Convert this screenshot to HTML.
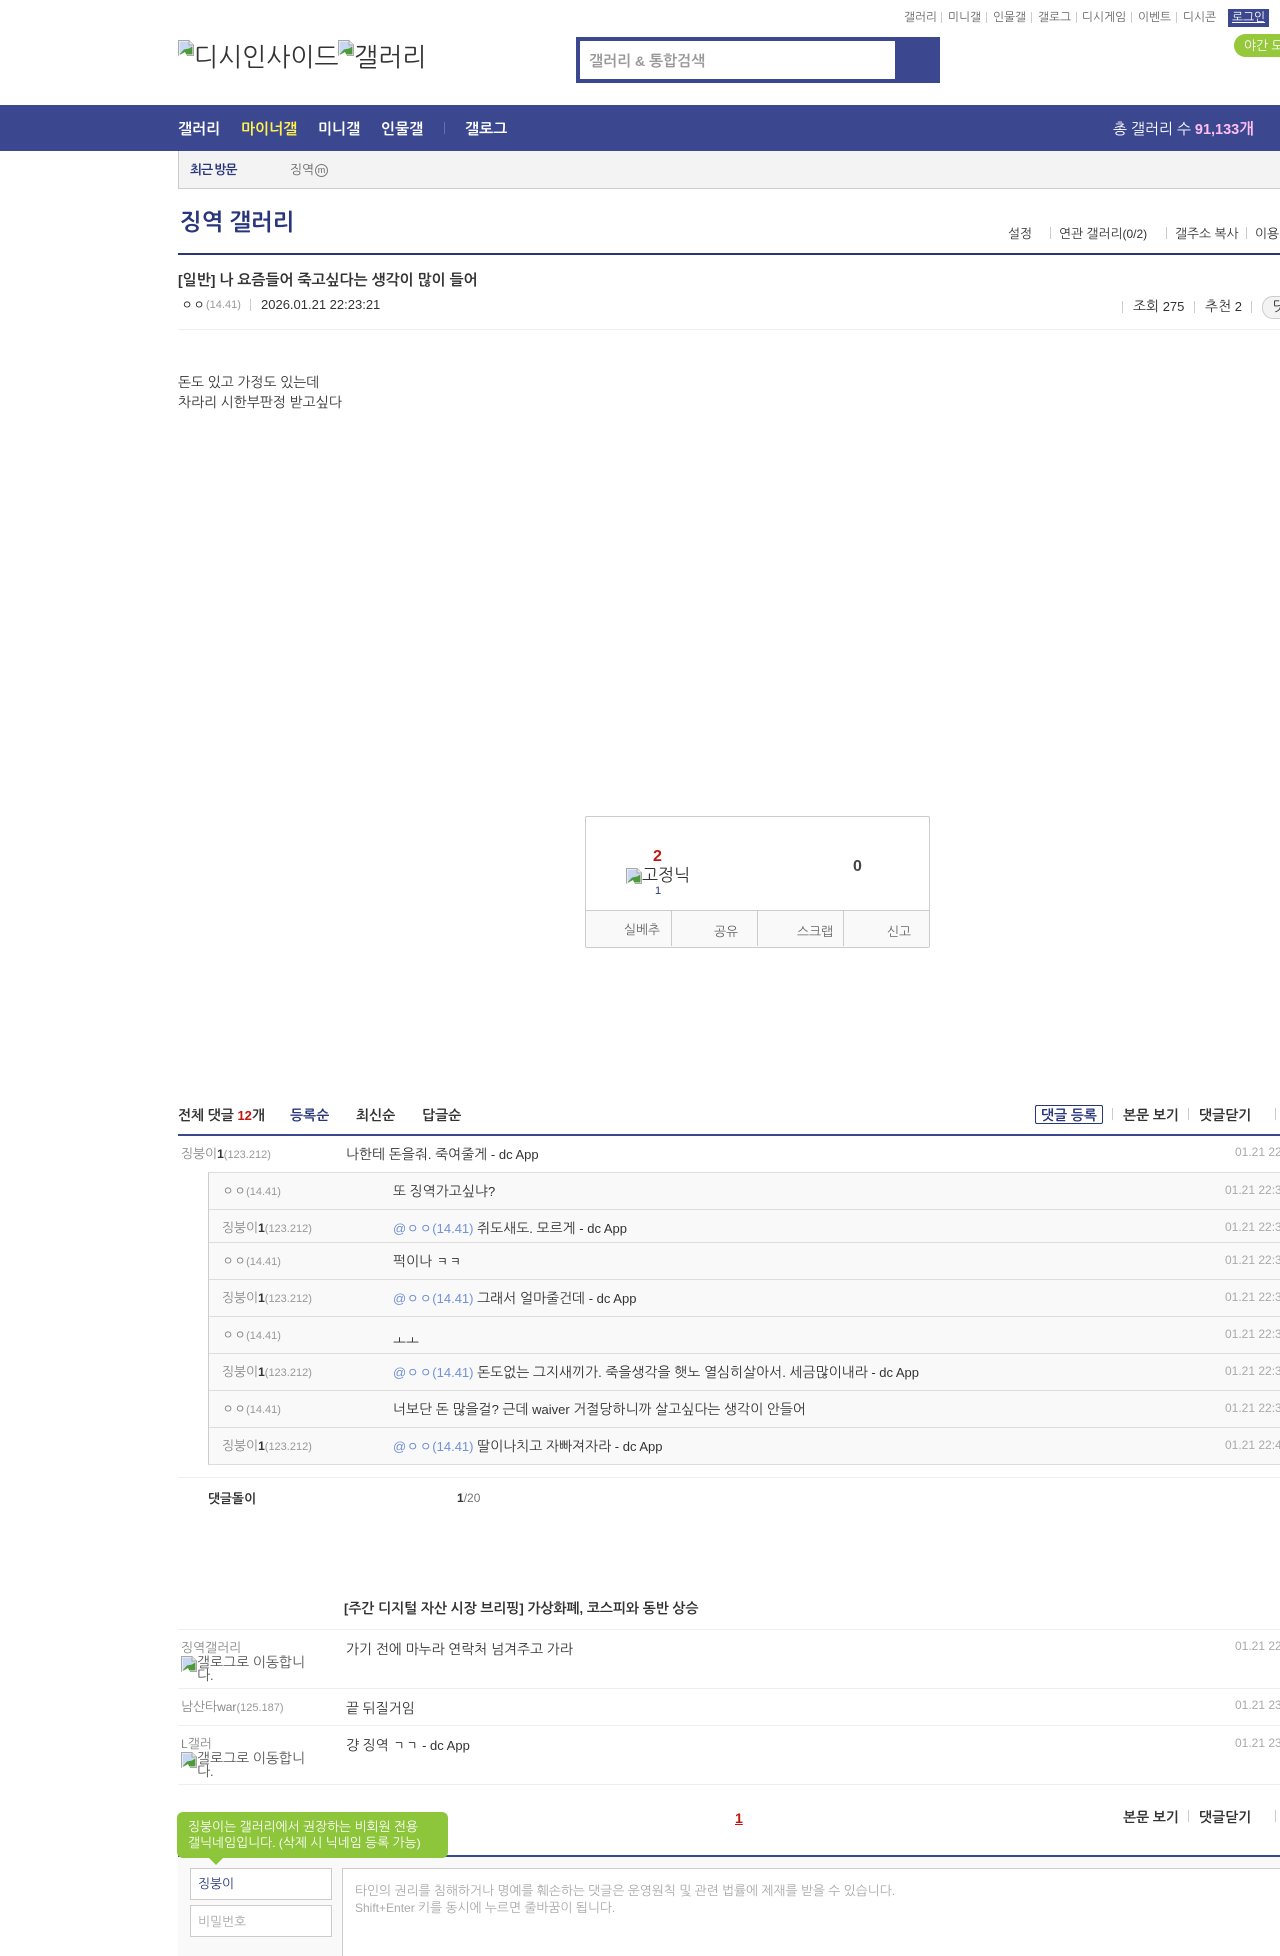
<!DOCTYPE html>
<html lang="ko">
<head>
<meta charset="utf-8">
<title>징역 갤러리</title>
<style>
html,body{margin:0;padding:0;width:1280px;height:1956px;overflow:hidden;background:#fff}
body{position:relative;font-family:"Liberation Sans","NanumGothic",sans-serif;font-size:13px;color:#333}
.t{position:absolute;white-space:nowrap;line-height:20px}
.b{position:absolute}
.s{position:absolute;width:1px;background:#ccc}
.n{font-size:12px;color:#888}
.n b{color:#333;font-weight:bold}
.n i{font-style:normal;font-size:11px;color:#999}
.d{font-size:12px;color:#aaa}
.m{color:#7192d6}
.h{font-weight:bold;color:#333}
.top{font-size:11px;color:#666}
.k{font-size:1.068em}
svg{position:absolute;display:block}
</style>
</head>
<body>
<svg width="0" height="0" style="position:absolute"><defs><symbol id="bk" viewBox="0 0 16 16"><path d="M.5.5H11L15.500 5V15.500H.5Z" fill="#fff" stroke="#a8a8a8"/><path d="M11 .5V5H15.500" fill="#e8e8e8" stroke="#a8a8a8"/><path d="M1.500 1.500H10.500V5.500H14.500V8L7 12 1.500 14.500Z" fill="#c7d6f2"/><path d="M1.500 14.500 6 9.500 11 8.500 14.500 6.500V14.500Z" fill="#4e9a3b"/><path d="M0 16 7 12 9 16Z" fill="#fff"/></symbol></defs></svg>

<!-- top links -->
<span class="t top" style="left:904px;top:8px">갤러리</span><i class="s" style="left:941px;top:12px;height:11px"></i>
<span class="t top" style="left:948px;top:8px">미니갤</span><i class="s" style="left:986px;top:12px;height:11px"></i>
<span class="t top" style="left:993px;top:8px">인물갤</span><i class="s" style="left:1031px;top:12px;height:11px"></i>
<span class="t top" style="left:1038px;top:8px">갤로그</span><i class="s" style="left:1076px;top:12px;height:11px"></i>
<span class="t top" style="left:1082px;top:8px">디시게임</span><i class="s" style="left:1131px;top:12px;height:11px"></i>
<span class="t top" style="left:1138px;top:8px">이벤트</span><i class="s" style="left:1176px;top:12px;height:11px"></i>
<span class="t top" style="left:1183px;top:8px">디시콘</span>
<div class="b" style="left:1228px;top:9px;width:41px;height:18px;background:#3b4890"></div>
<span class="t" style="left:1232px;top:8px;font-size:11px;color:#fff;text-decoration:underline">로그인</span>
<div class="b" style="left:1234px;top:34px;width:80px;height:23px;background:#95c83a;border-radius:12px"></div>
<span class="t" style="left:1244px;top:36px;font-size:12px;color:#fff">야간 모드</span>

<!-- logo -->
<svg style="left:178px;top:40px" width="16" height="16"><use href="#bk"/></svg>
<span class="t" style="left:194px;top:42px;font-size:24px;line-height:32px;color:#333">디시인사이드</span>
<svg style="left:338px;top:40px" width="16" height="16"><use href="#bk"/></svg>
<span class="t" style="left:354px;top:42px;font-size:24px;line-height:32px;color:#333">갤러리</span>

<!-- search -->
<div class="b" style="left:576px;top:37px;width:364px;height:46px;background:#3b4890"></div>
<div class="b" style="left:580px;top:41px;width:315px;height:38px;background:#fff"></div>
<span class="t" style="left:589px;top:51px;font-size:14px;font-weight:bold;color:#999">갤러리 &amp; 통합검색</span>

<!-- nav -->
<div class="b" style="left:0;top:105px;width:1280px;height:46px;background:#3b4890"></div>
<span class="t" style="left:178px;top:119px;font-size:14px;font-weight:bold;color:#fff">갤러리</span>
<span class="t" style="left:241px;top:119px;font-size:14px;font-weight:bold;color:#fff04f">마이너갤</span>
<span class="t" style="left:318px;top:119px;font-size:14px;font-weight:bold;color:#fff">미니갤</span>
<span class="t" style="left:381px;top:119px;font-size:14px;font-weight:bold;color:#fff">인물갤</span>
<i class="s" style="left:444px;top:122px;height:12px;background:#6670ab"></i>
<span class="t" style="left:465px;top:119px;font-size:14px;font-weight:bold;color:#fff">갤로그</span>
<span class="t" style="left:1113px;top:119px;font-size:14px;color:#fff">총 갤러리 수 <b style="color:#ffbdf0;font-size:14.5px">91,133개</b></span>

<!-- recent bar -->
<div class="b" style="left:178px;top:151px;width:1102px;height:37px;background:#f3f3f3;border-left:1px solid #ccc;border-bottom:1px solid #ccc"></div>
<span class="t" style="left:190px;top:160px;font-size:12px;font-weight:bold;color:#29367c;letter-spacing:-1px">최근 방문</span>
<span class="t" style="left:290px;top:160px;font-size:12px;color:#666">징역</span>
<div class="b" style="left:315px;top:164px;width:11px;height:11px;border:1px solid #777;border-radius:50%;font-size:9px;line-height:10px;text-align:center;color:#666">m</div>

<!-- title -->
<span class="t" style="left:180px;top:207px;font-size:21.6px;line-height:30px;font-weight:bold;color:#29367c">징역 갤러리</span>
<span class="t" style="left:1008px;top:224px;font-size:12px">설정</span><i class="s" style="left:1050px;top:227px;height:12px"></i>
<span class="t" style="left:1059px;top:224px;font-size:12px">연관 갤러리(0/2)</span><i class="s" style="left:1166px;top:227px;height:12px"></i>
<span class="t" style="left:1175px;top:224px;font-size:12px">갤주소 복사</span><i class="s" style="left:1246px;top:227px;height:12px"></i>
<span class="t" style="left:1255px;top:224px;font-size:12px">이용 안내</span>
<div class="b" style="left:178px;top:253px;width:1102px;height:2px;background:#29367c"></div>

<!-- post head -->
<span class="t" style="left:178px;top:270px;font-size:14px;font-weight:bold;color:#333">[일반] 나 요즘들어 죽고싶다는 생각이 많이 들어</span>
<span class="t" style="left:181px;top:295px;font-size:12px;color:#333">ㅇㅇ</span>
<span class="t" style="left:206px;top:295px;font-size:11px;color:#999">(14.41)</span>
<i class="s" style="left:250px;top:299px;height:12px"></i>
<span class="t" style="left:261px;top:295px;font-size:13px;color:#333">2026.01.21 22:23:21</span>
<i class="s" style="left:1122px;top:301px;height:12px"></i>
<span class="t" style="left:1133px;top:296px;font-size:13px">조회 275</span>
<i class="s" style="left:1194px;top:301px;height:12px"></i>
<span class="t" style="left:1205px;top:296px;font-size:13px">추천 2</span>
<i class="s" style="left:1251px;top:301px;height:12px"></i>
<div class="b" style="left:1262px;top:296px;width:70px;height:21px;background:#f3f3f3;border:1px solid #ccc;border-radius:11px"></div>
<span class="t" style="left:1273px;top:296px;font-size:13px">댓글 12</span>
<div class="b" style="left:178px;top:329px;width:1102px;height:1px;background:#eee"></div>

<!-- body -->
<span class="t" style="left:178px;top:372px;font-size:13px">돈도 있고 가정도 있는데</span>
<span class="t" style="left:178px;top:392px;font-size:13px">차라리 시한부판정 받고싶다</span>

<!-- recommend box -->
<div class="b" style="left:585px;top:816px;width:343px;height:130px;border:1px solid #ccc;border-radius:2px;background:#fff"></div>
<div class="b" style="left:586px;top:910px;width:343px;height:36px;background:#f9f9f9;border-top:1px solid #ccc"></div>
<i class="s" style="left:671px;top:910px;height:36px"></i>
<i class="s" style="left:757px;top:910px;height:36px"></i>
<i class="s" style="left:843px;top:910px;height:36px"></i>
<span class="t" style="left:653px;top:847px;font-size:16px;font-weight:bold;color:#c4160f">2</span>
<svg style="left:626px;top:868px" width="16" height="16"><use href="#bk"/></svg>
<span class="t" style="left:642px;top:866px;font-size:16px;color:#333">고정닉</span>
<span class="t" style="left:655px;top:881px;font-size:11px;color:#29367c">1</span>
<span class="t" style="left:853px;top:857px;font-size:16px;font-weight:bold;color:#444">0</span>
<span class="t" style="left:624px;top:920px;font-size:12px;color:#666">실베추</span>
<span class="t" style="left:714px;top:922px;font-size:12px;color:#666">공유</span>
<span class="t" style="left:797px;top:922px;font-size:12px;color:#666">스크랩</span>
<span class="t" style="left:887px;top:922px;font-size:12px;color:#666">신고</span>

<!-- comment header -->
<span class="t h" style="left:178px;top:1105px">전체 댓글 <span style="color:#c4160f">12</span>개</span>
<span class="t" style="left:290px;top:1105px;font-weight:bold;color:#29367c">등록순</span>
<span class="t h" style="left:356px;top:1105px">최신순</span>
<span class="t h" style="left:422px;top:1105px">답글순</span>
<div class="b" style="left:1035px;top:1105px;width:66px;height:17px;border:1px solid #29367c;border-radius:2px"></div>
<span class="t" style="left:1041px;top:1105px;font-weight:bold;color:#29367c">댓글 등록</span>
<i class="s" style="left:1112px;top:1108px;height:12px"></i>
<span class="t h" style="left:1123px;top:1105px">본문 보기</span>
<i class="s" style="left:1188px;top:1108px;height:12px"></i>
<span class="t h" style="left:1199px;top:1105px">댓글닫기</span>
<i class="s" style="left:1275px;top:1108px;height:12px"></i>
<div class="b" style="left:178px;top:1134px;width:1102px;height:2px;background:#3b4890"></div>

<!-- comment 1 -->
<span class="t n" style="left:181px;top:1144px">징붕이<b>1</b><i>(123.212)</i></span>
<span class="t" style="left:346px;top:1144px">나한테 돈을줘. 죽여줄게 - dc App</span>
<span class="t d" style="left:1235px;top:1142px">01.21 22:27:30</span>

<!-- replies -->
<div class="b" style="left:208px;top:1172px;width:1072px;height:291px;background:#f9f9f9;border-left:1px solid #ccc;border-top:1px solid #ddd;border-bottom:1px solid #ddd"></div>
<div class="b" style="left:209px;top:1209px;width:1071px;height:1px;background:#ddd"></div>
<div class="b" style="left:209px;top:1242px;width:1071px;height:1px;background:#ddd"></div>
<div class="b" style="left:209px;top:1279px;width:1071px;height:1px;background:#ddd"></div>
<div class="b" style="left:209px;top:1316px;width:1071px;height:1px;background:#ddd"></div>
<div class="b" style="left:209px;top:1353px;width:1071px;height:1px;background:#ddd"></div>
<div class="b" style="left:209px;top:1390px;width:1071px;height:1px;background:#ddd"></div>
<div class="b" style="left:209px;top:1427px;width:1071px;height:1px;background:#ddd"></div>

<span class="t n" style="left:222px;top:1181px">ㅇㅇ<i>(14.41)</i></span>
<span class="t" style="left:393px;top:1181px">또 징역가고싶냐?</span>
<span class="t d" style="left:1225px;top:1180px">01.21 22:30:12</span>

<span class="t n" style="left:222px;top:1218px">징붕이<b>1</b><i>(123.212)</i></span>
<span class="t" style="left:393px;top:1218px"><span class="m">@ㅇㅇ(14.41)</span> 쥐도새도. 모르게 - dc App</span>
<span class="t d" style="left:1225px;top:1217px">01.21 22:31:05</span>

<span class="t n" style="left:222px;top:1251px">ㅇㅇ<i>(14.41)</i></span>
<span class="t" style="left:393px;top:1251px">퍽이나 ㅋㅋ</span>
<span class="t d" style="left:1225px;top:1250px">01.21 22:31:40</span>

<span class="t n" style="left:222px;top:1288px">징붕이<b>1</b><i>(123.212)</i></span>
<span class="t" style="left:393px;top:1288px"><span class="m">@ㅇㅇ(14.41)</span> 그래서 얼마줄건데 - dc App</span>
<span class="t d" style="left:1225px;top:1287px">01.21 22:32:18</span>

<span class="t n" style="left:222px;top:1325px">ㅇㅇ<i>(14.41)</i></span>
<span class="t" style="left:393px;top:1329px">ㅗㅗ</span>
<span class="t d" style="left:1225px;top:1324px">01.21 22:33:02</span>

<span class="t n" style="left:222px;top:1362px">징붕이<b>1</b><i>(123.212)</i></span>
<span class="t" style="left:393px;top:1362px"><span class="m">@ㅇㅇ(14.41)</span> 돈도없는 그지새끼가. 죽을생각을 햇노 열심히살아서. 세금많이내라 - dc App</span>
<span class="t d" style="left:1225px;top:1361px">01.21 22:35:44</span>

<span class="t n" style="left:222px;top:1399px">ㅇㅇ<i>(14.41)</i></span>
<span class="t" style="left:393px;top:1399px">너보단 돈 많을걸? 근데 waiver 거절당하니까 살고싶다는 생각이 안들어</span>
<span class="t d" style="left:1225px;top:1398px">01.21 22:38:21</span>

<span class="t n" style="left:222px;top:1436px">징붕이<b>1</b><i>(123.212)</i></span>
<span class="t" style="left:393px;top:1436px"><span class="m">@ㅇㅇ(14.41)</span> 딸이나치고 자빠져자라 - dc App</span>
<span class="t d" style="left:1225px;top:1435px">01.21 22:40:09</span>

<!-- dolgi -->
<div class="b" style="left:178px;top:1477px;width:1102px;height:1px;background:#eee"></div>
<span class="t" style="left:208px;top:1489px;font-size:12px;font-weight:bold;color:#333">댓글돌이</span>
<span class="t" style="left:457px;top:1488px;font-size:12px;color:#777"><b style="color:#333">1</b>/20</span>
<span class="t h" style="left:344px;top:1598px">[주간 디지털 자산 시장 브리핑] 가상화폐, 코스피와 동반 상승</span>
<div class="b" style="left:178px;top:1629px;width:1102px;height:1px;background:#eee"></div>

<span class="t n" style="left:181px;top:1638px">징역갤러리</span>
<svg style="left:181px;top:1656px" width="16" height="16"><use href="#bk"/></svg>
<span class="t" style="left:197px;top:1652px;font-size:13px;color:#555">갤로그로 이동합니</span>
<span class="t" style="left:197px;top:1665px;font-size:13px;color:#555">다.</span>
<span class="t" style="left:346px;top:1639px">가기 전에 마누라 연락처 넘겨주고 가라</span>
<span class="t d" style="left:1235px;top:1636px">01.21 22:50:14</span>
<div class="b" style="left:178px;top:1688px;width:1102px;height:1px;background:#eee"></div>

<span class="t n" style="left:181px;top:1697px">남산타war<i>(125.187)</i></span>
<span class="t" style="left:346px;top:1698px">끝 뒤질거임</span>
<span class="t d" style="left:1235px;top:1695px">01.21 23:02:47</span>
<div class="b" style="left:178px;top:1725px;width:1102px;height:1px;background:#eee"></div>

<span class="t n" style="left:181px;top:1734px">L갤러</span>
<svg style="left:181px;top:1752px" width="16" height="16"><use href="#bk"/></svg>
<span class="t" style="left:197px;top:1748px;font-size:13px;color:#555">갤로그로 이동합니</span>
<span class="t" style="left:197px;top:1761px;font-size:13px;color:#555">다.</span>
<span class="t" style="left:346px;top:1735px">걍 징역 ㄱㄱ - dc App</span>
<span class="t d" style="left:1235px;top:1733px">01.21 23:15:33</span>
<div class="b" style="left:178px;top:1784px;width:1102px;height:1px;background:#eee"></div>

<!-- pager -->
<span class="t" style="left:735px;top:1808px;font-size:14px;font-weight:bold;color:#c4160f;text-decoration:underline">1</span>
<span class="t h" style="left:1123px;top:1807px">본문 보기</span>
<i class="s" style="left:1188px;top:1810px;height:12px"></i>
<span class="t h" style="left:1199px;top:1807px">댓글닫기</span>
<i class="s" style="left:1275px;top:1810px;height:12px"></i>

<!-- write box -->
<div class="b" style="left:178px;top:1855px;width:1102px;height:2px;background:#3b4890"></div>
<div class="b" style="left:178px;top:1857px;width:1102px;height:99px;background:#f9f9f9"></div>
<div class="b" style="left:190px;top:1868px;width:140px;height:30px;background:#fff;border:1px solid #ccc"></div>
<span class="t" style="left:198px;top:1874px;font-size:12px;color:#29367c">징붕이</span>
<div class="b" style="left:190px;top:1905px;width:140px;height:30px;background:#fff;border:1px solid #ccc"></div>
<span class="t" style="left:198px;top:1912px;font-size:12px;color:#aaa">비밀번호</span>
<div class="b" style="left:342px;top:1868px;width:938px;height:88px;background:#fff;border-left:1px solid #ccc;border-top:1px solid #ccc"></div>
<span class="t" style="left:355px;top:1881px;font-size:12px;color:#aaa">타인의 권리를 침해하거나 명예를 훼손하는 댓글은 운영원칙 및 관련 법률에 제재를 받을 수 있습니다.</span>
<span class="t" style="left:355px;top:1898px;font-size:12px;color:#aaa">Shift+Enter 키를 동시에 누르면 줄바꿈이 됩니다.</span>

<!-- tooltip -->
<div class="b" style="left:177px;top:1812px;width:271px;height:46px;background:#8dc63a;border-radius:6px"></div>
<div class="b" style="left:209px;top:1858px;width:0;height:0;border-left:7px solid transparent;border-right:7px solid transparent;border-top:7px solid #8dc63a"></div>
<span class="t" style="left:188px;top:1817px;font-size:12px;color:#fff">징붕이는 갤러리에서 권장하는 비회원 전용</span>
<span class="t" style="left:188px;top:1833px;font-size:12px;color:#fff">갤닉네임입니다. (삭제 시 닉네임 등록 가능)</span>
<script>
(function(){
  var re=/[\u3131-\u318E\uAC00-\uD7A3]+/g, w=document.createTreeWalker(document.body,NodeFilter.SHOW_TEXT), nodes=[], n;
  while(n=w.nextNode()){ if(n.parentNode.nodeName!=='SCRIPT' && n.parentNode.nodeName!=='STYLE' && /[\u3131-\u318E\uAC00-\uD7A3]/.test(n.nodeValue)) nodes.push(n); }
  nodes.forEach(function(t){
    var f=document.createDocumentFragment(), s=t.nodeValue, i=0, m; re.lastIndex=0;
    while(m=re.exec(s)){
      if(m.index>i) f.appendChild(document.createTextNode(s.slice(i,m.index)));
      var e=document.createElement('span'); e.className='k'; e.textContent=m[0]; f.appendChild(e);
      i=m.index+m[0].length;
    }
    if(i<s.length) f.appendChild(document.createTextNode(s.slice(i)));
    t.parentNode.replaceChild(f,t);
  });
})();
</script>
</body>
</html>
